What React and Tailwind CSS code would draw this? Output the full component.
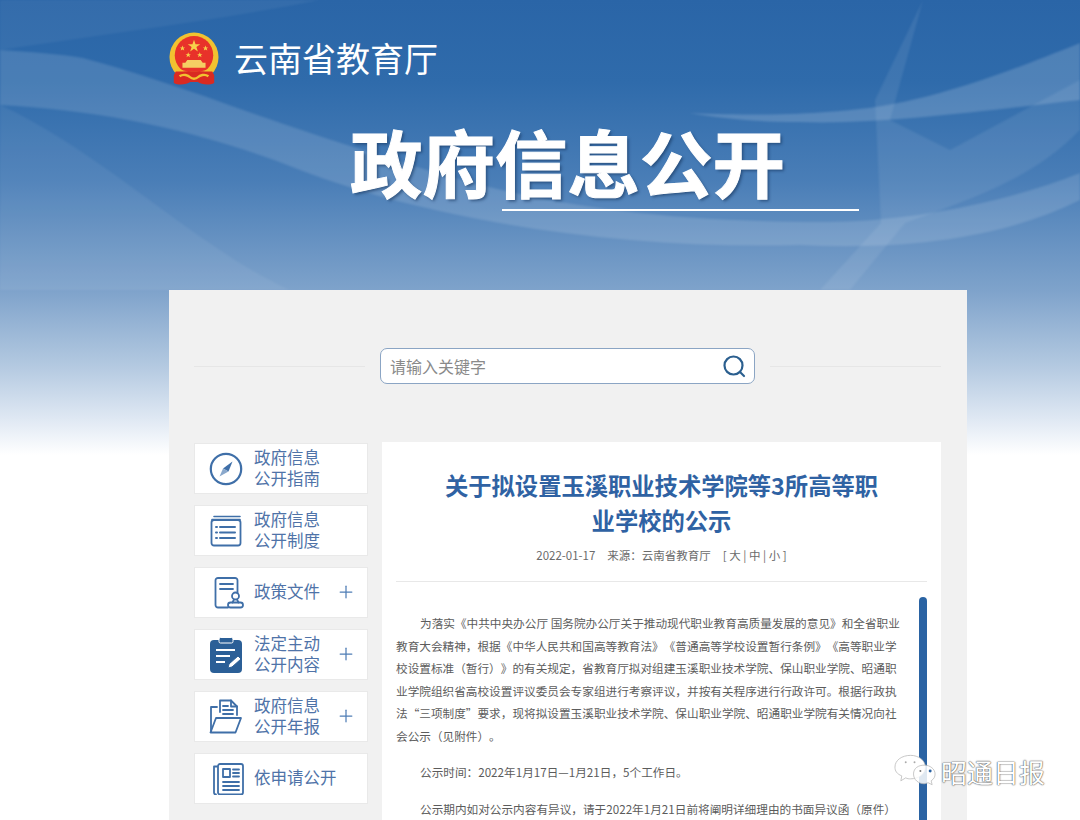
import React from "react";
import { Plus } from "lucide-react";

const FONT = "font-['Microsoft_YaHei','Noto_Sans_CJK_SC','Noto_Sans',sans-serif]";

const Emblem = () => (
  <svg width="50" height="54" viewBox="0 0 52 56">
    <circle cx="26" cy="26" r="25.500" fill="#f2c230" />
    <circle cx="26" cy="24" r="20" fill="#e8322a" />
    <path d="M26 8l1.600 4.600h4.900l-4 2.900 1.500 4.600-4-2.800-4 2.800 1.500-4.600-4-2.900h4.900z" fill="#f7d04a" />
    <path d="M14 14l.8 2h2l-1.600 1.200.6 2-1.800-1.200-1.800 1.200.6-2-1.600-1.200h2zM38 14l.8 2h2l-1.600 1.200.6 2-1.800-1.200-1.800 1.200.6-2-1.600-1.200h2zM20 21l.8 2h2l-1.600 1.200.6 2-1.800-1.200-1.800 1.200.6-2-1.600-1.200h2zM32 21l.8 2h2l-1.600 1.200.6 2-1.800-1.200-1.800 1.200.6-2-1.600-1.200h2z" fill="#f7d04a" />
    <path d="M19 29h14l2 3h3v5H14v-5h3z" fill="#f5cf63" />
    <path d="M8 36c5 7 31 7 36 0v5H8z" fill="#f2c230" />
    <path d="M7 41h38l2 4v8c-6 3-14 1-17-1h-8c-3 2-11 4-17 1v-8z" fill="#d92a22" />
    <path d="M11 46c4-3 9-1 11 1 2 2 6 2 8 0 2-2 7-4 11-1" fill="none" stroke="#f2c230" strokeWidth="2.500" />
  </svg>
);

const iconProps = {
  fill: "none",
  stroke: "#3f6fa8",
  strokeWidth: 1.8,
  strokeLinecap: "round",
  strokeLinejoin: "round",
};

const Compass = () => (
  <svg width="34" height="34" viewBox="0 0 34 34" {...iconProps}>
    <circle cx="17" cy="17" r="15.200" strokeWidth="2.200" />
    <path d="M23.500 9.500l-4 10-5.500-3z" fill="#3f6fa8" stroke="none" />
    <path d="M10.500 24.500l3.500-8 5.500 3z" fill="#8aa8cc" stroke="none" />
  </svg>
);

const Rules = () => (
  <svg width="32" height="32" viewBox="0 0 32 32" {...iconProps}>
    <path d="M4 1.500h26M2 4.500h28" strokeWidth="1.600" />
    <rect x="1.500" y="5" width="29" height="25.500" rx="2.500" />
    <path d="M10 12h15M10 17.500h15M10 23h15" strokeWidth="2" />
    <path d="M6 12h1M6 17.500h1M6 23h1" strokeWidth="2" />
  </svg>
);

const PolicyDoc = () => (
  <svg width="30" height="32" viewBox="0 0 30 32" {...iconProps}>
    <path d="M14 30.500H4a2.500 2.500 0 0 1-2.500-2.500V3.500A2.500 2.500 0 0 1 4 1h17a2.500 2.500 0 0 1 2.500 2.500V16" />
    <path d="M6 7h13M6 12h13" />
    <circle cx="21.500" cy="19" r="3.500" />
    <path d="M20 22.500l-1.500 3M23 22.500l1.500 3" />
    <rect x="14" y="25.500" width="15" height="5" rx="2.500" />
  </svg>
);

const Clipboard = () => (
  <svg width="32" height="36" viewBox="0 0 32 36">
    <rect x="0" y="3" width="32" height="33" rx="4" fill="#2b5f97" />
    <rect x="9" y="0.500" width="14" height="5.500" rx="1.500" fill="#2b5f97" stroke="#fff" strokeWidth="1" />
    <path d="M6 13h19M6 19h14M6 25h9" stroke="#fff" strokeWidth="2.200" fill="none" />
    <path d="M18 31l1-4 9-8 3 3-9 8z" fill="#fff" stroke="#2b5f97" strokeWidth="1" />
  </svg>
);

const FolderDoc = () => (
  <svg width="33" height="35" viewBox="0 0 33 35" {...iconProps}>
    <path d="M11 13V1.500h11l6 6V16" />
    <path d="M22 1.500V7.500h6" />
    <path d="M14 7h5M14 11h10M14 15h10" />
    <path d="M8 8H2v25" />
    <path d="M1.500 33.500h25L32 19H7z" />
  </svg>
);

const Newspaper = () => (
  <svg width="32" height="32" viewBox="0 0 32 32" {...iconProps}>
    <path d="M5 3.500H2v26a2 2 0 0 0 2 2" />
    <rect x="6" y="1" width="25" height="30.500" rx="2" />
    <rect x="11" y="6" width="7" height="8" />
    <path d="M21 6.500h6M21 10h6M21 13.500h6M11 19h16M11 23h16M11 27h16" />
  </svg>
);

const menu = [
  { icon: <Compass />, lines: ["政府信息", "公开指南"], offset: "" },
  { icon: <Rules />, lines: ["政府信息", "公开制度"], offset: "ml-[1px]" },
  { icon: <PolicyDoc />, lines: ["政策文件"], plus: true, offset: "ml-[5px]" },
  { icon: <Clipboard />, lines: ["法定主动", "公开内容"], plus: true, offset: "ml-[1px]" },
  { icon: <FolderDoc />, lines: ["政府信息", "公开年报"], plus: true, offset: "" },
  { icon: <Newspaper />, lines: ["依申请公开"], offset: "ml-[3px]" },
];

const SideItem = ({ icon, lines, plus, offset }) => (
  <div className="flex h-[51px] items-center border border-[#e9e9e9] bg-white pl-[14px]">
    <div className="flex w-[45px] shrink-0 justify-start">
      <div className={offset}>{icon}</div>
    </div>
    <div className="mb-[2px] w-[78px] text-[16.500px] leading-[21px] text-[#4f73a8]">
      {lines.map((line) => (
        <div key={line} className="whitespace-nowrap">
          {line}
        </div>
      ))}
    </div>
    {plus && <Plus className="ml-[4px] mb-[1px] text-[#4f7db5]" size={20} strokeWidth={1.500} />}
  </div>
);

const Rule = () => <div className="h-px flex-1 bg-[#e6e6e6]" />;

const Banner = () => (
  <div className="absolute inset-x-0 top-0 h-[455px] overflow-hidden bg-[linear-gradient(180deg,#2a65a7_0%,#2f6bab_18%,#4a7eb7_40%,#7fa3cb_64%,#b2c8e0_80%,#dfe8f3_92%,#ffffff_100%)]">
    <svg className="absolute inset-0 blur-[1px]" width="1080" height="455" viewBox="0 0 1080 455">
      <path d="M0 0H320C220 20 100 35 0 50z" fill="#fff" fillOpacity="0.05" />
      <path d="M0 50C30 52 60 54 83 58 130 70 170 85 207 97 270 120 330 140 386 157 500 195 620 222 826 222 900 222 1000 205 1080 173V200C1000 240 900 250 800 245 620 250 430 220 300 170 200 130 100 110 0 105z" fill="#fff" fillOpacity="0.13" />
      <path d="M0 105C100 150 200 250 290 290H0z" fill="#fff" fillOpacity="0.06" />
      <path d="M689 113C760 116 800 114 826 112 900 108 964 90 1080 43V100C990 110 880 125 800 122 750 122 720 118 689 113z" fill="#fff" fillOpacity="0.16" />
      <path d="M923 0L875 100 881 223 820 290H850L905 223C1000 190 1040 170 1080 130V80L950 150 890 120z" fill="#fff" fillOpacity="0.08" />
    </svg>
  </div>
);

const App = () => (
  <div className={`relative h-[820px] w-[1080px] overflow-hidden bg-white ${FONT}`}>
    <Banner />
    <div className="relative ml-[169px] w-[798px]">
      <header className="h-[290px] pt-[32px]">
        <div className="flex h-[54px] items-center gap-[15px]">
          <Emblem />
          <span className="mb-[2px] text-[34px] leading-[54px] text-white">云南省教育厅</span>
        </div>
        <div className="ml-[181px] mt-[33px] w-fit text-[72.500px] font-bold leading-[84px] text-white [-webkit-text-stroke:1px_white] [text-shadow:2px_2px_3px_rgba(20,50,90,0.6)]">
          政府信息公开
        </div>
        <div className="ml-[333px] mt-[6px] h-[2px] w-[357px] bg-white" />
      </header>

      <main className="h-[530px] bg-[#f1f1f1] pl-[25px] pr-[26px]">
        <div className="flex items-center pt-[58px]">
          <Rule />
          <div className="mx-[15px] flex h-[36px] w-[375px] items-center justify-between rounded-[7px] border border-[#8ba5c4] bg-white pl-[9px] pr-[8px]">
            <span className="text-[16px] text-[#8a8a8a]">请输入关键字</span>
            <svg width="24" height="24" viewBox="0 0 24 24" fill="none" stroke="#2b5f8f" strokeWidth="2.200" strokeLinecap="round">
              <circle cx="11.500" cy="11.500" r="9" />
              <path d="M18 18l4 4" />
            </svg>
          </div>
          <Rule />
        </div>

        <div className="mt-[58px] flex gap-[14px]">
          <aside className="mt-[1px] flex w-[174px] shrink-0 flex-col gap-[11px]">
            {menu.map((item) => (
              <SideItem key={item.lines.join("")} {...item} />
            ))}
          </aside>

          <article className="relative h-[400px] flex-1 overflow-hidden bg-white px-[14px] [text-spacing-trim:space-all]">
            <h1 className="mx-auto mt-[26px] w-[440px] text-center text-[23.300px] font-bold leading-[35px] text-[#2f62a3]">
              关于拟设置玉溪职业技术学院等3所高等职业学校的公示
            </h1>
            <div className="mt-[8px] flex justify-center gap-[12px] whitespace-pre text-[11.500px] leading-[18px] text-[#6b6b6b]">
              <span>2022-01-17</span>
              <span>来源：云南省教育厅</span>
              <span>[ 大 | 中 | 小 ]</span>
            </div>
            <div className="mt-[17px] h-px bg-[#e8e8e8]" />
            <div className="mt-[30px] w-[506px] text-[11.650px] leading-[22.500px] text-[#5c5c5c]">
              <p className="indent-[24px]">
                为落实《中共中央办公厅 国务院办公厅关于推动现代职业教育高质量发展的意见》和全省职业教育大会精神，根据《中华人民共和国高等教育法》《普通高等学校设置暂行条例》《高等职业学校设置标准（暂行）》的有关规定，省教育厅拟对组建玉溪职业技术学院、保山职业学院、昭通职业学院组织省高校设置评议委员会专家组进行考察评议，并按有关程序进行行政许可。根据行政执法“三项制度”要求，现将拟设置玉溪职业技术学院、保山职业学院、昭通职业学院有关情况向社会公示（见附件）。
              </p>
              <p className="mt-[14px] indent-[24px]">公示时间：2022年1月17日—1月21日，5个工作日。</p>
              <p className="mt-[14px] indent-[24px]">
                公示期内如对公示内容有异议，请于2022年1月21日前将阐明详细理由的书面异议函（原件）
              </p>
            </div>
            <div className="absolute right-[14px] top-[155px] h-[260px] w-[8px] rounded-full bg-[#2a63a3]" />
          </article>
        </div>
      </main>
    </div>

    <div className="absolute left-[893px] top-[753px] flex items-center gap-[3px]">
      <svg width="45" height="38" viewBox="0 0 46 38" fill="#fff" stroke="#b9b9b9" strokeWidth="0.800">
        <path d="M18 2c8 0 15 5 15 12s-7 12-15 12c-2 0-3 0-5-1l-5 3 1-5C4 21 2 18 2 14 2 7 9 2 18 2z" />
        <path d="M32 12c6 0 11 4 11 9 0 3-1 5-4 7l1 4-4-2c-1 0-3 1-4 1-6 0-11-4-11-10s5-9 11-9z" fillOpacity="0.850" />
        <circle cx="13" cy="9" r="1" fill="#aaa" stroke="none" />
        <circle cx="22" cy="9" r="1" fill="#aaa" stroke="none" />
        <circle cx="28" cy="18" r="1" fill="#777" stroke="none" />
        <circle cx="38" cy="18" r="1.500" fill="#2a63a3" stroke="none" />
      </svg>
      <span className="text-[26px] leading-none text-white [text-shadow:0_0_1.500px_#444,0_0_1px_#444]">昭通日报</span>
    </div>
  </div>
);

export default App;
